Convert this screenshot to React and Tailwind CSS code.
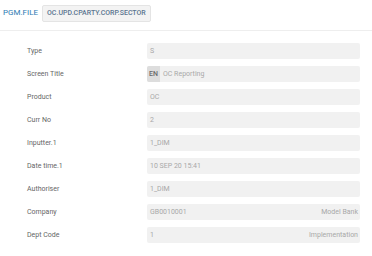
import React from 'react'

const rows = [
    { label: 'Type', value: 'S' },
    { label: 'Screen Title', value: 'OC Reporting', lang: 'EN' },
    { label: 'Product', value: 'OC' },
    { label: 'Curr No', value: '2' },
    { label: 'Inputter.1', value: '1_DIM' },
    { label: 'Date time.1', value: '10 SEP 20 15:41' },
    { label: 'Authoriser', value: '1_DIM' },
    { label: 'Company', value: 'GB0010001', extra: 'Model Bank' },
    { label: 'Dept Code', value: '1', extra: 'Implementation' },
]

const App = () => {
    return (
        <main className="w-[372px] h-[256px] bg-white overflow-hidden" style={{ fontFamily: 'Roboto, "Liberation Sans", sans-serif' }}>
            <header className="h-[31px] flex items-center gap-[4px] pl-[3px] pb-[6px] pt-[2px] border-b border-[#eeeeee]">
                <span className="text-[8px] text-[#2d7bb3]">PGM.FILE</span>
                <span className="h-[17px] px-[4px] flex items-center bg-[#f3f3f3] border border-[#e4e4e4] rounded-[2px] text-[7px] font-medium text-[#5a7590]">
                    OC.UPD.CPARTY.CORP.SECTOR
                </span>
            </header>

            <div className="pt-[12px] pl-[27px] pr-[12px] flex flex-col gap-[7px]">
                {rows.map((row) => (
                    <div key={row.label} className="flex items-center h-[16px]">
                        <div className="w-[120px] text-[7px] text-[#666666]">{row.label}</div>
                        <div className="flex-1 h-[16px] bg-[#f1f1f1] rounded-[2px] flex items-center text-[7px] text-[#a8a8a8]">
                            {row.lang && (
                                <span className="h-full w-[13px] bg-[#dddddd] rounded-l-[2px] flex items-center justify-center text-[#6a6a6a] font-medium mr-[3px]">
                                    {row.lang}
                                </span>
                            )}
                            <span className={row.lang ? '' : 'pl-[3px]'}>{row.value}</span>
                            {row.extra && <span className="ml-auto pr-[2px]">{row.extra}</span>}
                        </div>
                    </div>
                ))}
            </div>
        </main>
    )
}

export default App
